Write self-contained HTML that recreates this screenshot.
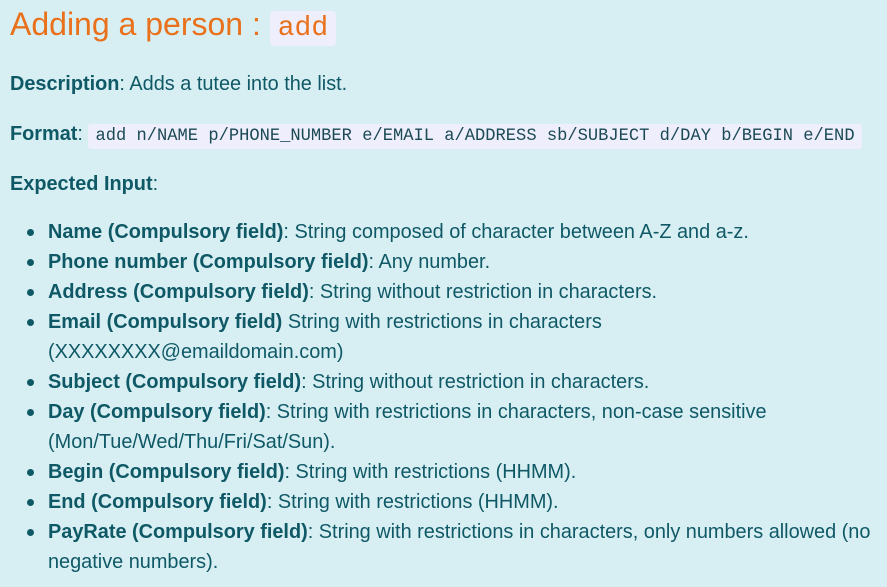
<!DOCTYPE html>
<html><head><style>
body{margin:0;background:#d7eff3;width:887px;height:587px;overflow:hidden;font-family:"Liberation Sans",sans-serif;color:#0f5866;font-size:19.9px;}
.a{position:absolute;white-space:nowrap;line-height:22px;}
h1{position:absolute;left:10px;top:6px;margin:0;font-weight:normal;font-size:32px;color:#e9711c;white-space:nowrap;}
.hc{background:#eeeefc;border-radius:4px;padding:2px 8px;font-family:"Liberation Mono",monospace;font-size:28px;}
.c{background:#eeeefc;border-radius:3px;padding:3px 7px;font-family:"Liberation Mono",monospace;font-size:17.1px;color:#1b4a55;}
.dot{position:absolute;left:27px;width:7px;height:7px;border-radius:50%;background:#0f5866;}
b{color:#0f5866}
</style></head><body>
<h1>Adding a person : <span class="hc">add</span></h1>
<div class="a" style="left:10px;top:73px"><b>Description</b>: Adds a tutee into the list.</div>
<div class="a" style="left:10px;top:123px"><b>Format</b>: <span class="c">add n/NAME p/PHONE_NUMBER e/EMAIL a/ADDRESS sb/SUBJECT d/DAY b/BEGIN e/END</span></div>
<div class="a" style="left:10px;top:173px"><b>Expected Input</b>:</div>
<div class="dot" style="top:229px"></div><div class="a" style="left:48px;top:221px"><b>Name (Compulsory field)</b>: String composed of character between A-Z and a-z.</div>
<div class="dot" style="top:259px"></div><div class="a" style="left:48px;top:251px"><b>Phone number (Compulsory field)</b>: Any number.</div>
<div class="dot" style="top:289px"></div><div class="a" style="left:48px;top:281px"><b>Address (Compulsory field)</b>: String without restriction in characters.</div>
<div class="dot" style="top:319px"></div><div class="a" style="left:48px;top:311px"><b>Email (Compulsory field)</b> String with restrictions in characters</div>
<div class="a" style="left:48px;top:341px">(XXXXXXXX@emaildomain.com)</div>
<div class="dot" style="top:379px"></div><div class="a" style="left:48px;top:371px"><b>Subject (Compulsory field)</b>: String without restriction in characters.</div>
<div class="dot" style="top:409px"></div><div class="a" style="left:48px;top:401px"><b>Day (Compulsory field)</b>: String with restrictions in characters, non-case sensitive</div>
<div class="a" style="left:48px;top:431px">(Mon/Tue/Wed/Thu/Fri/Sat/Sun).</div>
<div class="dot" style="top:469px"></div><div class="a" style="left:48px;top:461px"><b>Begin (Compulsory field)</b>: String with restrictions (HHMM).</div>
<div class="dot" style="top:499px"></div><div class="a" style="left:48px;top:491px"><b>End (Compulsory field)</b>: String with restrictions (HHMM).</div>
<div class="dot" style="top:529px"></div><div class="a" style="left:48px;top:521px"><b>PayRate (Compulsory field)</b>: String with restrictions in characters, only numbers allowed (no</div>
<div class="a" style="left:48px;top:551px">negative numbers).</div>
</body></html>
